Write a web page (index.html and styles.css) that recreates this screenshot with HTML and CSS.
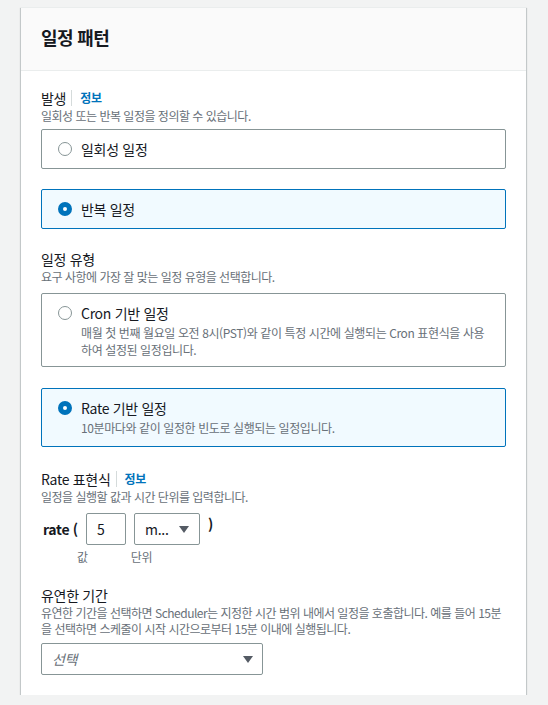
FILE: index.html
```html
<!DOCTYPE html>
<html lang="ko">
<head>
<meta charset="utf-8">
<title>일정 패턴</title>
<link rel="stylesheet" href="styles.css">
</head>
<body>
<section class="card">
  <header class="card-header">
    <h2 class="card-title">일정 패턴</h2>
  </header>
  <div class="card-body">
    <div class="field">
      <div class="field-label">발생 <a class="info" href="#">정보</a></div>
      <p class="field-desc">일회성 또는 반복 일정을 정의할 수 있습니다.</p>
      <div class="tiles tiles-first">
        <label class="tile">
          <span class="radio"></span>
          <span class="tile-text"><span class="tile-title">일회성 일정</span></span>
        </label>
        <label class="tile selected">
          <span class="radio"></span>
          <span class="tile-text"><span class="tile-title">반복 일정</span></span>
        </label>
      </div>
    </div>

    <div class="field">
      <div class="field-label">일정 유형</div>
      <p class="field-desc">요구 사항에 가장 잘 맞는 일정 유형을 선택합니다.</p>
      <div class="tiles">
        <label class="tile">
          <span class="radio"></span>
          <span class="tile-text">
            <span class="tile-title">Cron 기반 일정</span>
            <span class="tile-desc">매월 첫 번째 월요일 오전 8시(PST)와 같이 특정 시간에 실행되는 Cron 표현식을 사용<br>하여 설정된 일정입니다.</span>
          </span>
        </label>
        <label class="tile selected tile-rate">
          <span class="radio"></span>
          <span class="tile-text">
            <span class="tile-title">Rate 기반 일정</span>
            <span class="tile-desc">10분마다와 같이 일정한 빈도로 실행되는 일정입니다.</span>
          </span>
        </label>
      </div>
    </div>

    <div class="field field-rate">
      <div class="field-label">Rate 표현식 <a class="info" href="#">정보</a></div>
      <p class="field-desc">일정을 실행할 값과 시간 단위를 입력합니다.</p>
      <div class="rate-row">
        <span class="rate-word">rate (</span>
        <span class="input input-value">5</span>
        <span class="input input-unit">m... <span class="caret"></span></span>
        <span class="rate-close">)</span>
      </div>
      <div class="rate-labels">
        <span>값</span>
        <span>단위</span>
      </div>
    </div>

    <div class="field">
      <div class="field-label">유연한 기간</div>
      <p class="field-desc">유연한 기간을 선택하면 Scheduler는 지정한 시간 범위 내에서 일정을 호출합니다. 예를 들어 15분<br>을 선택하면 스케줄이 시작 시간으로부터 15분 이내에 실행됩니다.</p>
      <div class="select">
        <span class="placeholder">선택</span>
        <span class="caret"></span>
      </div>
    </div>
  </div>
</section>
</body>
</html>
```

FILE: styles.css
```css
* { box-sizing: border-box; }

body {
  margin: 0;
  padding: 7px 22px 0 21px;
  background: #f2f3f3;
  font-family: "Noto Sans CJK KR", "Noto Sans", sans-serif;
  color: #16191f;
  font-size: 14px;
  letter-spacing: -0.3px;
}

.card {
  background: #ffffff;
  box-shadow: 0 1px 1px 0 rgba(0, 28, 36, 0.3), 1px 1px 1px 0 rgba(0, 28, 36, 0.15), -1px 1px 1px 0 rgba(0, 28, 36, 0.15);
  border-top: 1px solid #eaeded;
}

.card-header {
  background: #fafafa;
  border-bottom: 1px solid #eaeded;
  padding: 18px 20px 21px;
}

.card-title {
  margin: 0;
  font-size: 18px;
  line-height: 23px;
  font-weight: 700;
  letter-spacing: -0.6px;
}

.card-body {
  padding: 17px 20px 20px;
  display: flex;
  flex-direction: column;
  gap: 20px;
}

.field-label {
  font-size: 14px;
  line-height: 20px;
  display: flex;
  align-items: center;
}

.info {
  color: #0073bb;
  font-weight: 700;
  font-size: 12px;
  text-decoration: none;
  border-left: 1px solid #d5dbdb;
  margin-left: 5px;
  padding-left: 8px;
  line-height: 16px;
}

.field-desc {
  margin: 0;
  font-size: 12px;
  line-height: 16px;
  color: #687078;
  white-space: nowrap;
  letter-spacing: -0.5px;
}

.tiles {
  margin-top: 8px;
  display: flex;
  flex-direction: column;
  gap: 20px;
}

.tiles-first { margin-top: 5px; }

.tile {
  display: flex;
  align-items: flex-start;
  gap: 9px;
  border: 1px solid #879596;
  border-radius: 2px;
  padding: 8px 16px;
  background: #ffffff;
}

.tile.selected {
  border-color: #0073bb;
  background: #f1faff;
}

.tile-rate {
  margin-top: 1px;
  padding-bottom: 10px;
}

.radio {
  flex: none;
  width: 14px;
  height: 14px;
  margin-top: 4px;
  border-radius: 50%;
  border: 1.5px solid #879596;
  background: #ffffff;
}

.tile.selected .radio {
  border: 5px solid #0073bb;
}

.tile-text {
  display: flex;
  flex-direction: column;
}

.tile-title {
  line-height: 22px;
}

.tile-desc {
  font-size: 12px;
  line-height: 17px;
  color: #687078;
  white-space: nowrap;
  letter-spacing: -0.4px;
}

.field-rate {
  margin-top: 2px;
}

.field-rate .rate-row {
  margin-top: 8px;
}

.rate-row {
  display: flex;
  align-items: center;
  gap: 8px;
  padding-left: 2px;
}

.rate-word {
  font-weight: 700;
  width: 35px;
  white-space: nowrap;
}

.input {
  height: 32px;
  border: 1px solid #879596;
  border-radius: 2px;
  display: flex;
  align-items: center;
  padding: 0 10px;
  background: #ffffff;
}

.input-value { width: 40px; }

.input-unit {
  width: 66px;
  justify-content: space-between;
  padding-right: 10px;
}

.rate-close {
  align-self: flex-start;
  line-height: 22px;
  font-weight: 700;
}

.caret {
  width: 0;
  height: 0;
  border-left: 5px solid transparent;
  border-right: 5px solid transparent;
  border-top: 7px solid #545b64;
}

.rate-labels {
  display: flex;
  gap: 43px;
  padding-left: 36px;
  margin-top: 4px;
  font-size: 12px;
  line-height: 16px;
  color: #687078;
}

.select {
  margin-top: 6px;
  width: 222px;
  height: 32px;
  border: 1px solid #879596;
  border-radius: 2px;
  display: flex;
  align-items: center;
  justify-content: space-between;
  padding: 0 9px 0 10px;
}

.placeholder {
  font-style: italic;
  color: #687078;
}
```
